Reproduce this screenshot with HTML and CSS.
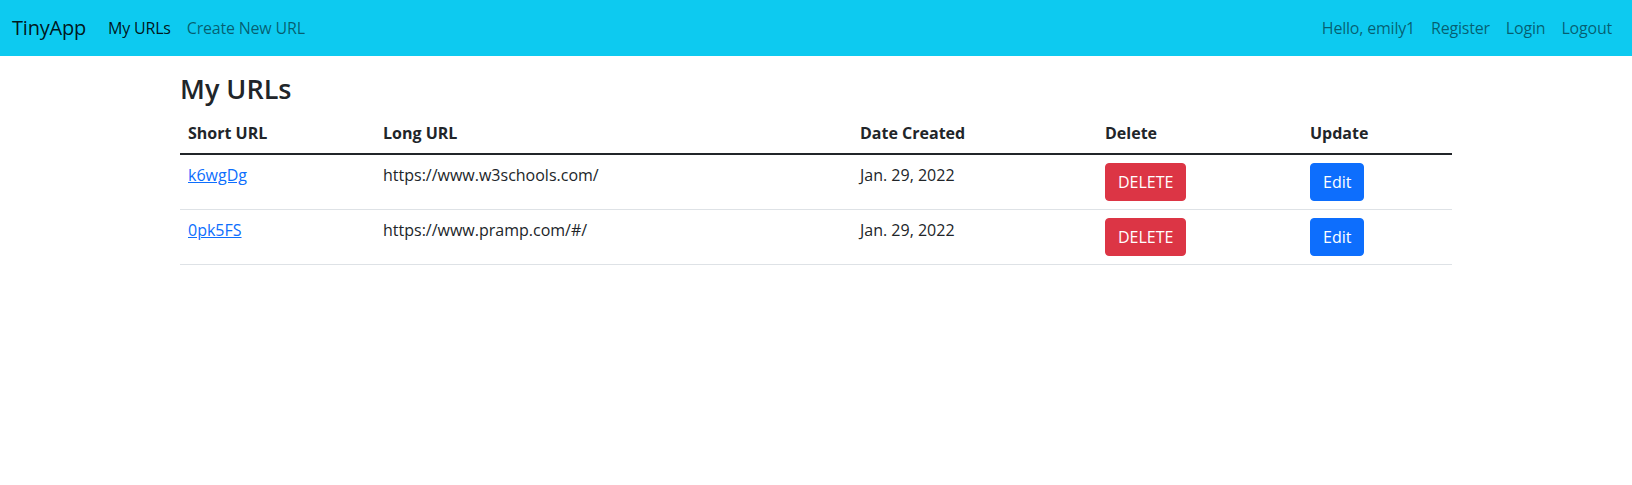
FILE: index.html
```html
<!DOCTYPE html>
<html lang="en">
<head>
<meta charset="utf-8">
<title>TinyApp</title>
<link rel="stylesheet" href="styles.css">
</head>
<body>
<nav class="navbar">
  <div class="nav-left">
    <a class="brand" href="#">TinyApp</a>
    <a class="nav-link active" href="#">My URLs</a>
    <a class="nav-link" href="#">Create New URL</a>
  </div>
  <div class="nav-right">
    <span class="nav-link">Hello, emily1</span>
    <a class="nav-link" href="#">Register</a>
    <a class="nav-link" href="#">Login</a>
    <a class="nav-link" href="#">Logout</a>
  </div>
</nav>
<main class="container">
  <h3 class="title">My URLs</h3>
  <table class="table">
    <thead>
      <tr>
        <th class="c-short">Short URL</th>
        <th class="c-long">Long URL</th>
        <th class="c-date">Date Created</th>
        <th class="c-del">Delete</th>
        <th class="c-upd">Update</th>
      </tr>
    </thead>
    <tbody>
      <tr>
        <td><a class="link" href="#">k6wgDg</a></td>
        <td>https://www.w3schools.com/</td>
        <td>Jan. 29, 2022</td>
        <td><button class="btn btn-danger">DELETE</button></td>
        <td><button class="btn btn-primary">Edit</button></td>
      </tr>
      <tr>
        <td><a class="link" href="#">0pk5FS</a></td>
        <td>https://www.pramp.com/#/</td>
        <td>Jan. 29, 2022</td>
        <td><button class="btn btn-danger">DELETE</button></td>
        <td><button class="btn btn-primary">Edit</button></td>
      </tr>
    </tbody>
  </table>
</main>
</body>
</html>
```

FILE: styles.css
```css
* { box-sizing: border-box; }
body {
  margin: 0;
  font-family: "Open Sans", "Noto Sans", sans-serif;
  font-size: 16px;
  line-height: 1.5;
  color: #212529;
  background: #fff;
}
.navbar {
  background: #0dcaf0;
  height: 56px;
  padding: 0 12px;
  display: flex;
  align-items: center;
  justify-content: space-between;
}
.nav-left, .nav-right { display: flex; align-items: center; }
.brand {
  font-size: 20px;
  line-height: 30px;
  color: rgba(0,0,0,.9);
  text-decoration: none;
  margin-right: 14px;
  padding: 5px 0;
  letter-spacing: -0.2px;
}
.nav-link {
  padding: 8px;
  color: rgba(0,0,0,.55);
  text-decoration: none;
  letter-spacing: -0.2px;
}
.nav-link.active { color: rgba(0,0,0,.9); }
.container {
  max-width: 1272px;
  margin: 0 auto;
  padding-top: 16px;
}
.title {
  font-size: 27px;
  font-weight: 600;
  line-height: 34px;
  margin: 0 0 7px;
}
.table {
  width: 100%;
  border-collapse: collapse;
}
.table th, .table td {
  padding: 8px;
  text-align: left;
  vertical-align: top;
  border-bottom: 1px solid #dee2e6;
}
.table th { font-weight: 700; border-bottom: 2px solid #212529; }
.c-short { width: 195px; }
.c-long { width: 477px; }
.c-date { width: 245px; }
.c-del { width: 205px; }
.link { color: #0d6efd; text-decoration: underline; }
.btn {
  display: inline-block;
  font-family: inherit;
  font-size: 16px;
  line-height: 1.5;
  padding: 6px 12px;
  border: 1px solid transparent;
  border-radius: 4px;
  color: #fff;
  cursor: pointer;
}
.btn-danger { background: #dc3545; border-color: #dc3545; }
.btn-primary { background: #0d6efd; border-color: #0d6efd; }
```
